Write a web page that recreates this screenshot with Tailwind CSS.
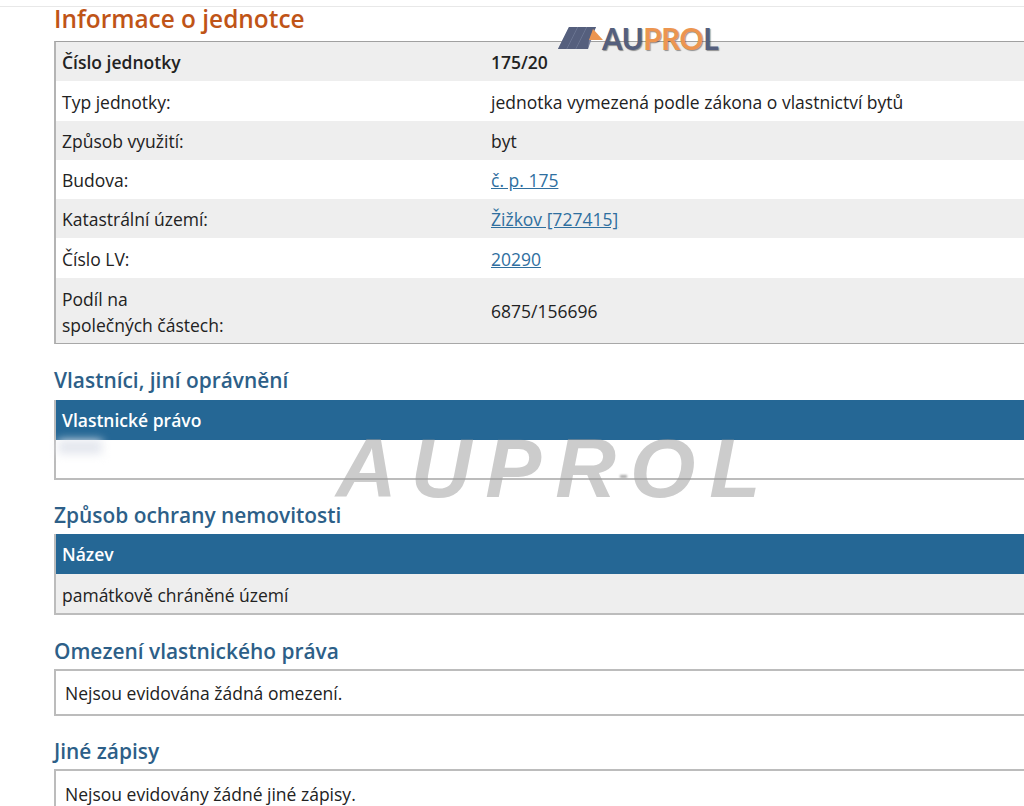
<!DOCTYPE html>
<html lang="cs">
<head>
<meta charset="utf-8">
<script src="https://cdn.jsdelivr.net/npm/@tailwindcss/browser@4"></script>
</head>
<body class="bg-white overflow-hidden">
<div class="relative w-[1024px] h-[806px] overflow-hidden font-['Open_Sans','Noto_Sans',sans-serif] text-[17.5px] text-[#222]">
  <div class="h-[7px] border-b border-[#e8e8e8]"></div>
  <div class="pl-[54px] w-[1040px]">
    <h1 class="h-[34px] text-[24.4px] leading-[23px] font-semibold text-[#bf5417]">Informace o jednotce</h1>
    <div class="border-2 border-r-0 border-t border-b border-[#b4b4b4] border-t-[#a0a0a0] border-b-[#a8a8a8]">
      <div class="flex items-center h-[39px] pt-[2px] bg-[#eeeeee] font-semibold"><div class="w-[435px] pl-[6px]">Číslo jednotky</div><div>175/20</div></div>
      <div class="flex items-center h-[40px] pt-[2px]"><div class="w-[435px] pl-[6px]">Typ jednotky:</div><div>jednotka vymezená podle zákona o vlastnictví bytů</div></div>
      <div class="flex items-center h-[39px] pt-[2px] bg-[#eeeeee]"><div class="w-[435px] pl-[6px]">Způsob využití:</div><div>byt</div></div>
      <div class="flex items-center h-[39px] pt-[2px]"><div class="w-[435px] pl-[6px]">Budova:</div><a class="underline text-[#2f6f9f]">č. p. 175</a></div>
      <div class="flex items-center h-[39px] pt-[2px] bg-[#eeeeee]"><div class="w-[435px] pl-[6px]">Katastrální území:</div><a class="underline text-[#2f6f9f]">Žižkov [727415]</a></div>
      <div class="flex items-center h-[40px] pt-[2px]"><div class="w-[435px] pl-[6px]">Číslo LV:</div><a class="underline text-[#2f6f9f]">20290</a></div>
      <div class="flex items-center h-[65px] pt-[2px] bg-[#eeeeee]"><div class="w-[435px] pl-[6px] leading-[26px]">Podíl na<br>společných částech:</div><div>6875/156696</div></div>
    </div>
    <h2 class="mt-[23px] h-[33px] text-[20.9px] leading-[26px] font-semibold text-[#2d5f88]">Vlastníci, jiní oprávnění</h2>
    <div class="border-2 border-r-0 border-t-0 border-[#bcbcbc] h-[80px]">
      <div class="flex items-center h-[40px] pt-[1px] bg-[#256795] text-white font-semibold pl-[6px]">Vlastnické právo</div>
    </div>
    <h2 class="mt-[22px] h-[32px] text-[20.9px] leading-[26px] font-semibold text-[#2d5f88]">Způsob ochrany nemovitosti</h2>
    <div class="border-2 border-r-0 border-t-0 border-[#bcbcbc]">
      <div class="flex items-center h-[40px] pt-[1px] bg-[#256795] text-white font-semibold pl-[6px]">Název</div>
      <div class="flex items-center h-[39px] pt-[3px] bg-[#eeeeee] pl-[6px]">památkově chráněné území</div>
    </div>
    <h2 class="mt-[23px] h-[31px] text-[20.9px] leading-[26px] font-semibold text-[#2d5f88]">Omezení vlastnického práva</h2>
    <div class="border-2 border-r-0 border-[#bcbcbc] h-[47px] pt-[2px] flex items-center pl-[9px]">Nejsou evidována žádná omezení.</div>
    <h2 class="mt-[22px] h-[31px] text-[20.9px] leading-[26px] font-semibold text-[#2d5f88]">Jiné zápisy</h2>
    <div class="border-2 border-r-0 border-[#bcbcbc] h-[47px] pt-[4px] flex items-center pl-[9px]">Nejsou evidovány žádné jiné zápisy.</div>
  </div>

  <div class="absolute left-[58px] top-[440px] w-[44px] h-[14px] bg-[#e4e7ee] blur-[5px]"></div>
  <div class="absolute left-[620px] top-[475px] w-[7px] h-[3px] bg-[#aaa] blur-[1px]"></div>

  <div class="absolute left-[558px] top-[27px] flex items-start">
    <svg class="w-[46px] h-[24px]" viewBox="0 0 46 24"><path d="M11 0h27L30 22H0z" fill="#7b84a0"/><path d="M11 0h8.5L8.5 22H0z" fill="#555f7d"/><path d="M20 0h8.5L17.5 22H9z" fill="#555f7d"/><path d="M29 0h9L31 13l-1 9H18z" fill="#555f7d"/><path d="M35 2L45 13H31z" fill="#ec9550"/></svg>
    <span class="ml-[-2px] mt-[-4px] text-[29.5px] leading-[32px] font-bold font-['Lato',sans-serif] text-[#555f7d] tracking-[-0.3px] [text-shadow:1px_1px_1px_#0006]">AU<span class="text-[#ec9550]">PRO</span>L</span>
  </div>
  <div class="absolute left-[336px] top-[423px] text-[84px] leading-[90px] font-bold italic font-['Liberation_Sans',sans-serif] text-[#9a9a9a]/50 tracking-[14px]">AUPROL</div>
</div>
</body>
</html>
